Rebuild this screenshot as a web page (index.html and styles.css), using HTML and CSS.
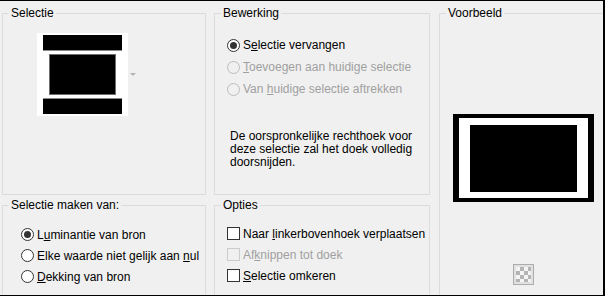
FILE: index.html
```html
<!DOCTYPE html>
<html lang="nl">
<head>
  <meta charset="UTF-8">
  <title>Selectie maken</title>
  <link rel="stylesheet" href="styles.css">
</head>
<body>
  <div class="dialog">
    <fieldset class="group">
      <legend>Selectie</legend>
      <div class="picker">
        <div class="thumb">
          <div class="bar bar-top"></div>
          <div class="mid"></div>
          <div class="bar bar-bottom"></div>
        </div>
        <span class="arrow"></span>
      </div>
    </fieldset>

    <fieldset class="group">
      <legend>Bewerking</legend>
      <div class="options edit-options">
        <div class="opt"><span class="radio on"></span><span>S<u>e</u>lectie vervangen</span></div>
        <div class="opt off"><span class="radio"></span><span><u>T</u>oevoegen aan huidige selectie</span></div>
        <div class="opt off"><span class="radio"></span><span>Van <u>h</u>uidige selectie aftrekken</span></div>
      </div>
      <p class="note">De oorspronkelijke rechthoek voor<br>deze selectie zal het doek volledig<br>doorsnijden.</p>
    </fieldset>

    <fieldset class="group open preview">
      <legend>Voorbeeld</legend>
      <div class="frame"><div class="frame-inner"></div></div>
      <button class="swatch"><span class="checker"></span></button>
    </fieldset>

    <fieldset class="group open">
      <legend>Selectie maken van:</legend>
      <div class="options source-options">
        <div class="opt"><span class="radio on"></span><span>L<u>u</u>minantie van bron</span></div>
        <div class="opt"><span class="radio"></span><span>Elke waarde niet gelijk aan <u>n</u>ul</span></div>
        <div class="opt"><span class="radio"></span><span><u>D</u>ekking van bron</span></div>
      </div>
    </fieldset>

    <fieldset class="group open">
      <legend>Opties</legend>
      <div class="options extra-options">
        <div class="opt"><span class="check"></span><span>Naar <u>l</u>inkerbovenhoek verplaatsen</span></div>
        <div class="opt off"><span class="check"></span><span>Af<u>k</u>nippen tot doek</span></div>
        <div class="opt"><span class="check"></span><span><u>S</u>electie omkeren</span></div>
      </div>
    </fieldset>
  </div>
</body>
</html>
```

FILE: styles.css
```css
body {
  margin: 0;
  background: #f0f0f0;
  font-family: 'Segoe UI', 'Liberation Sans', sans-serif;
  font-size: 12px;
  color: #000;
}

.dialog {
  box-sizing: border-box;
  width: 605px;
  height: 296px;
  border-top: 1px solid #000;
  border-right: 2px solid #000;
  border-bottom: 1px solid #000;
  padding: 5px 0 0 2px;
  overflow: hidden;
  display: grid;
  grid-template-columns: 204px 216px 169px;
  grid-template-rows: 189px 97px;
  column-gap: 8px;
  row-gap: 3px;
}

.group {
  min-width: 0;
  margin: 0;
  padding: 0 6px;
  border: 1px solid #dcdcdc;
}

.group.open {
  border-bottom: none;
}

.group legend {
  padding: 0 2px;
  line-height: 14px;
}

/* Selectie */
.picker {
  display: flex;
  align-items: center;
  gap: 2px;
  margin: 13px 0 0 28px;
}

.thumb {
  width: 91px;
  height: 83px;
  box-sizing: border-box;
  padding: 2px 6px;
  background: #fff;
  display: flex;
  flex-direction: column;
  gap: 3px;
}

.bar {
  height: 15px;
  background: #000;
}

.bar-top {
  border-bottom: 1px solid #8a8a8a;
}

.bar-bottom {
  border-top: 1px solid #8a8a8a;
}

.mid {
  height: 39px;
  margin: 0 6px;
  background: #000;
  border: 1px solid #6e6e6e;
}

.arrow {
  width: 0;
  height: 0;
  border-left: 3px solid transparent;
  border-right: 3px solid transparent;
  border-top: 3px solid #b4b4b4;
}

/* options */
.opt {
  display: flex;
  align-items: center;
  height: 21px;
  white-space: nowrap;
}

.opt.off {
  color: #a0a0a0;
}

.edit-options {
  padding: 14px 0 0 6px;
}

.edit-options .opt {
  height: 22px;
}

.source-options {
  padding: 12px 0 0 12px;
}

.extra-options {
  padding: 11px 0 0 6px;
}

.radio {
  position: relative;
  box-sizing: border-box;
  width: 13px;
  height: 13px;
  margin-right: 3px;
  border: 1px solid #333;
  border-radius: 50%;
  background: #fff;
  flex: none;
}

.radio.on::after {
  content: '';
  position: absolute;
  left: 2px;
  top: 2px;
  width: 7px;
  height: 7px;
  border-radius: 50%;
  background: #333;
}

.off .radio {
  border-color: #bcbcbc;
  background: #f0f0f0;
}

.check {
  box-sizing: border-box;
  width: 13px;
  height: 13px;
  margin-right: 3px;
  border: 1px solid #333;
  background: #fff;
  flex: none;
}

.off .check {
  border-color: #cccccc;
  background: #f0f0f0;
}

.note {
  margin: 30px 0 0 9px;
  line-height: 13px;
  white-space: nowrap;
}

/* Voorbeeld */
.preview {
  grid-column: 3;
  grid-row: 1 / 3;
  margin-left: 1px;
  display: flex;
  flex-direction: column;
  align-items: center;
}

.frame {
  margin-top: 94px;
  border: solid #000;
  border-width: 4px 6px;
  padding: 7px 11px 6px;
  background: #fff;
}

.frame-inner {
  width: 107px;
  height: 67px;
  background: #000;
}

.swatch {
  margin-top: 62px;
  width: 21px;
  height: 21px;
  padding: 2px;
  border: 1px solid #adadad;
  background: #e1e1e1;
  display: flex;
}

.checker {
  flex: 1;
  background: repeating-conic-gradient(#b4b4b4 0 25%, #f4f4f4 0 50%) 0 0 / 8px 8px;
}
```
